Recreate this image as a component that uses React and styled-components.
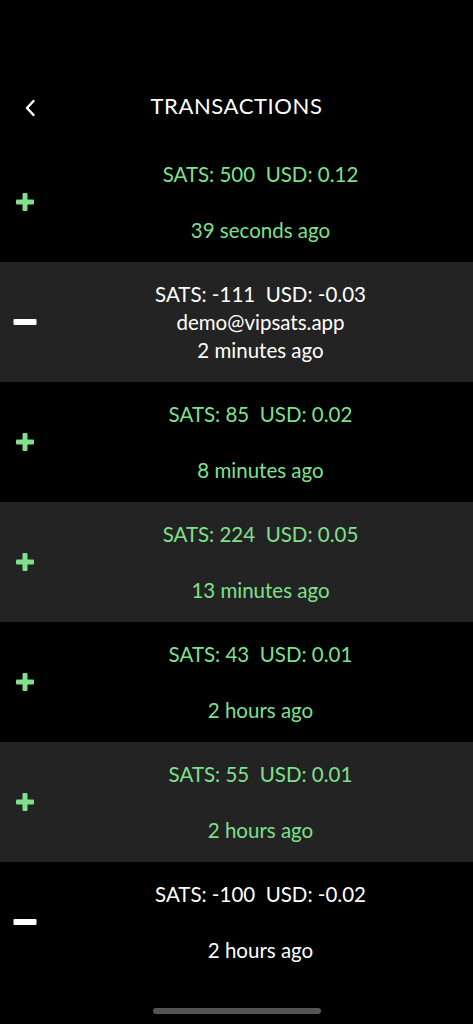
import React from "react";
import styled, { createGlobalStyle } from "styled-components";

const GlobalStyle = createGlobalStyle`
  html, body {
    margin: 0;
    padding: 0;
    background: #000;
  }
  body {
    font-family: Lato, "Open Sans", sans-serif;
  }
`;

const transactions = [
  { sats: 500, usd: "0.12", from: "", time: "39 seconds ago" },
  { sats: -111, usd: "-0.03", from: "demo@vipsats.app", time: "2 minutes ago" },
  { sats: 85, usd: "0.02", from: "", time: "8 minutes ago" },
  { sats: 224, usd: "0.05", from: "", time: "13 minutes ago" },
  { sats: 43, usd: "0.01", from: "", time: "2 hours ago" },
  { sats: 55, usd: "0.01", from: "", time: "2 hours ago" },
  { sats: -100, usd: "-0.02", from: "", time: "2 hours ago" },
];

const PlusIcon = () => (
  <svg width="20" height="20" viewBox="0 0 20 20">
    <rect x="7.5" y="1" width="5" height="18" rx="1" fill="#7fe08a" />
    <rect x="1" y="7.5" width="18" height="5" rx="1" fill="#7fe08a" />
  </svg>
);

const MinusIcon = () => (
  <svg width="24" height="8" viewBox="0 0 24 8">
    <rect x="0.5" y="1" width="23" height="6" rx="1" fill="#fff" />
  </svg>
);

const BackIcon = () => (
  <svg width="12" height="18" viewBox="0 0 12 18">
    <path
      d="M9.5 2 L3 9 L9.5 16"
      fill="none"
      stroke="#fff"
      strokeWidth="2.4"
      strokeLinecap="round"
      strokeLinejoin="round"
    />
  </svg>
);

const App = () => {
  return (
    <Screen>
      <GlobalStyle />
      <Header>
        <BackButton>
          <BackIcon />
        </BackButton>
        <Title>TRANSACTIONS</Title>
      </Header>
      <List>
        {transactions.map((tx, index) => {
          const incoming = tx.sats > 0;
          return (
            <Row key={index} $shaded={index % 2 === 1}>
              <IconCell>{incoming ? <PlusIcon /> : <MinusIcon />}</IconCell>
              <Details $incoming={incoming}>
                <Line>{`SATS: ${tx.sats}  USD: ${tx.usd}`}</Line>
                <Line>{tx.from}</Line>
                <Line>{tx.time}</Line>
              </Details>
            </Row>
          );
        })}
      </List>
      <HomeBar />
    </Screen>
  );
};

const Screen = styled.div`
  width: 473px;
  height: 1024px;
  background: #000;
  display: flex;
  flex-direction: column;
  overflow: hidden;
`;

const Header = styled.div`
  height: 142px;
  padding-top: 86px;
  box-sizing: border-box;
  position: relative;
  display: flex;
  justify-content: center;
`;

const BackButton = styled.div`
  position: absolute;
  left: 24px;
  top: 99px;
  width: 12px;
  height: 18px;
  display: flex;
`;

const Title = styled.h1`
  margin: 0;
  height: 40px;
  line-height: 40px;
  font-size: 22px;
  font-weight: 400;
  color: #fff;
  letter-spacing: 0.6px;
`;

const List = styled.div`
  display: flex;
  flex-direction: column;
`;

const Row = styled.div`
  height: 120px;
  display: flex;
  align-items: center;
  background: ${(p) => (p.$shaded ? "#232323" : "#000")};
`;

const IconCell = styled.div`
  width: 48px;
  display: flex;
  justify-content: center;
  align-items: center;
  padding-left: 1px;
  box-sizing: border-box;
`;

const Details = styled.div`
  flex: 1;
  display: flex;
  flex-direction: column;
  align-items: center;
  color: ${(p) => (p.$incoming ? "#7fe08a" : "#fff")};
`;

const Line = styled.div`
  height: 28px;
  line-height: 28px;
  font-size: 20.5px;
  white-space: pre;
`;

const HomeBar = styled.div`
  margin: auto auto 10px;
  width: 168px;
  height: 6px;
  border-radius: 3px;
  background: #555;
`;

export default App;
